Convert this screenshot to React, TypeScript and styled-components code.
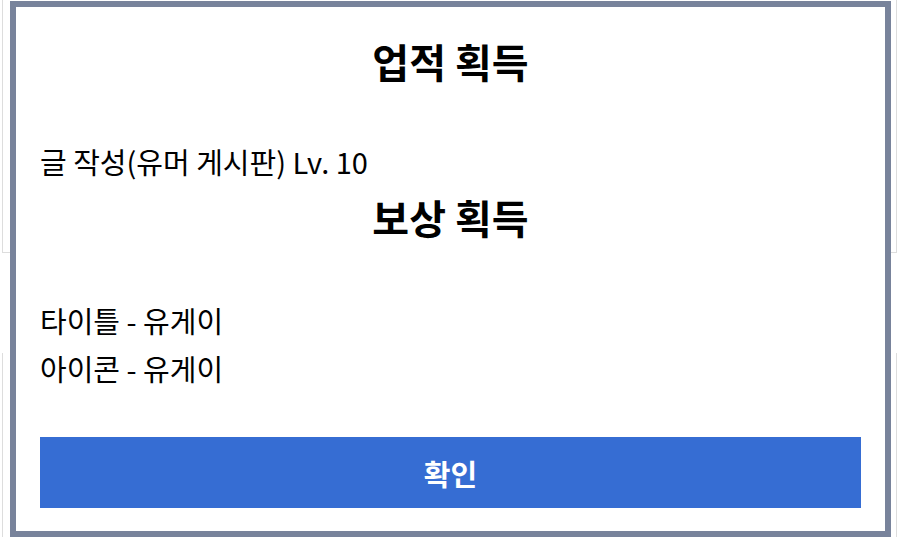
import React from "react"
import styled, { createGlobalStyle } from "styled-components"

const GlobalStyle = createGlobalStyle`
  html, body {
    margin: 0;
    padding: 0;
    background: #ffffff;
    font-family: "Noto Sans CJK KR", "Noto Sans", sans-serif;
  }
  * {
    box-sizing: border-box;
  }
`

const Page = styled.div`
  height: 537px;
  overflow: hidden;
  display: flex;
  flex-direction: column;
  padding: 0 3px 0 2px;
`

const BackCard = styled.div<{ $height: number }>`
  height: ${p => p.$height}px;
  flex-shrink: 0;
  border: 1px solid #dddddd;
  border-top: none;
  background: #ffffff;
`

const Spacer = styled.div`
  height: 100px;
  flex-shrink: 0;
`

const Modal = styled.div`
  position: fixed;
  left: 10px;
  top: 1px;
  width: 881px;
  height: 536px;
  border: 6px solid #78839b;
  background: #ffffff;
  padding: 0 24px;
  display: flex;
  flex-direction: column;
  color: #000000;
`

const Title = styled.h2<{ $gap: number }>`
  margin: ${p => p.$gap}px 0 0;
  font-size: 40px;
  line-height: 46px;
  font-weight: 700;
  text-align: center;
`

const Line = styled.p<{ $gap?: number }>`
  margin: ${p => p.$gap ?? 0}px 0 0;
  font-size: 29px;
  line-height: 48px;
  font-weight: 400;
`

const ConfirmButton = styled.button`
  margin-top: 45px;
  height: 71px;
  width: 100%;
  flex-shrink: 0;
  border: none;
  background: #366dd3;
  color: #ffffff;
  font-family: inherit;
  font-size: 29px;
  font-weight: 700;
  cursor: pointer;
`

const rewards = ["타이틀 - 유게이", "아이콘 - 유게이"]

export default function App() {
  return (
    <>
      <GlobalStyle />
      <Page>
        <BackCard $height={253} />
        <Spacer />
        <BackCard $height={200} />
      </Page>
      <Modal>
        <Title $gap={31}>업적 획득</Title>
        <Line $gap={53}>글 작성(유머 게시판) Lv. 10</Line>
        <Title $gap={9}>보상 획득</Title>
        {rewards.map((r, i) => (
          <Line key={r} $gap={i === 0 ? 56 : 0}>{r}</Line>
        ))}
        <ConfirmButton type="button">확인</ConfirmButton>
      </Modal>
    </>
  )
}
